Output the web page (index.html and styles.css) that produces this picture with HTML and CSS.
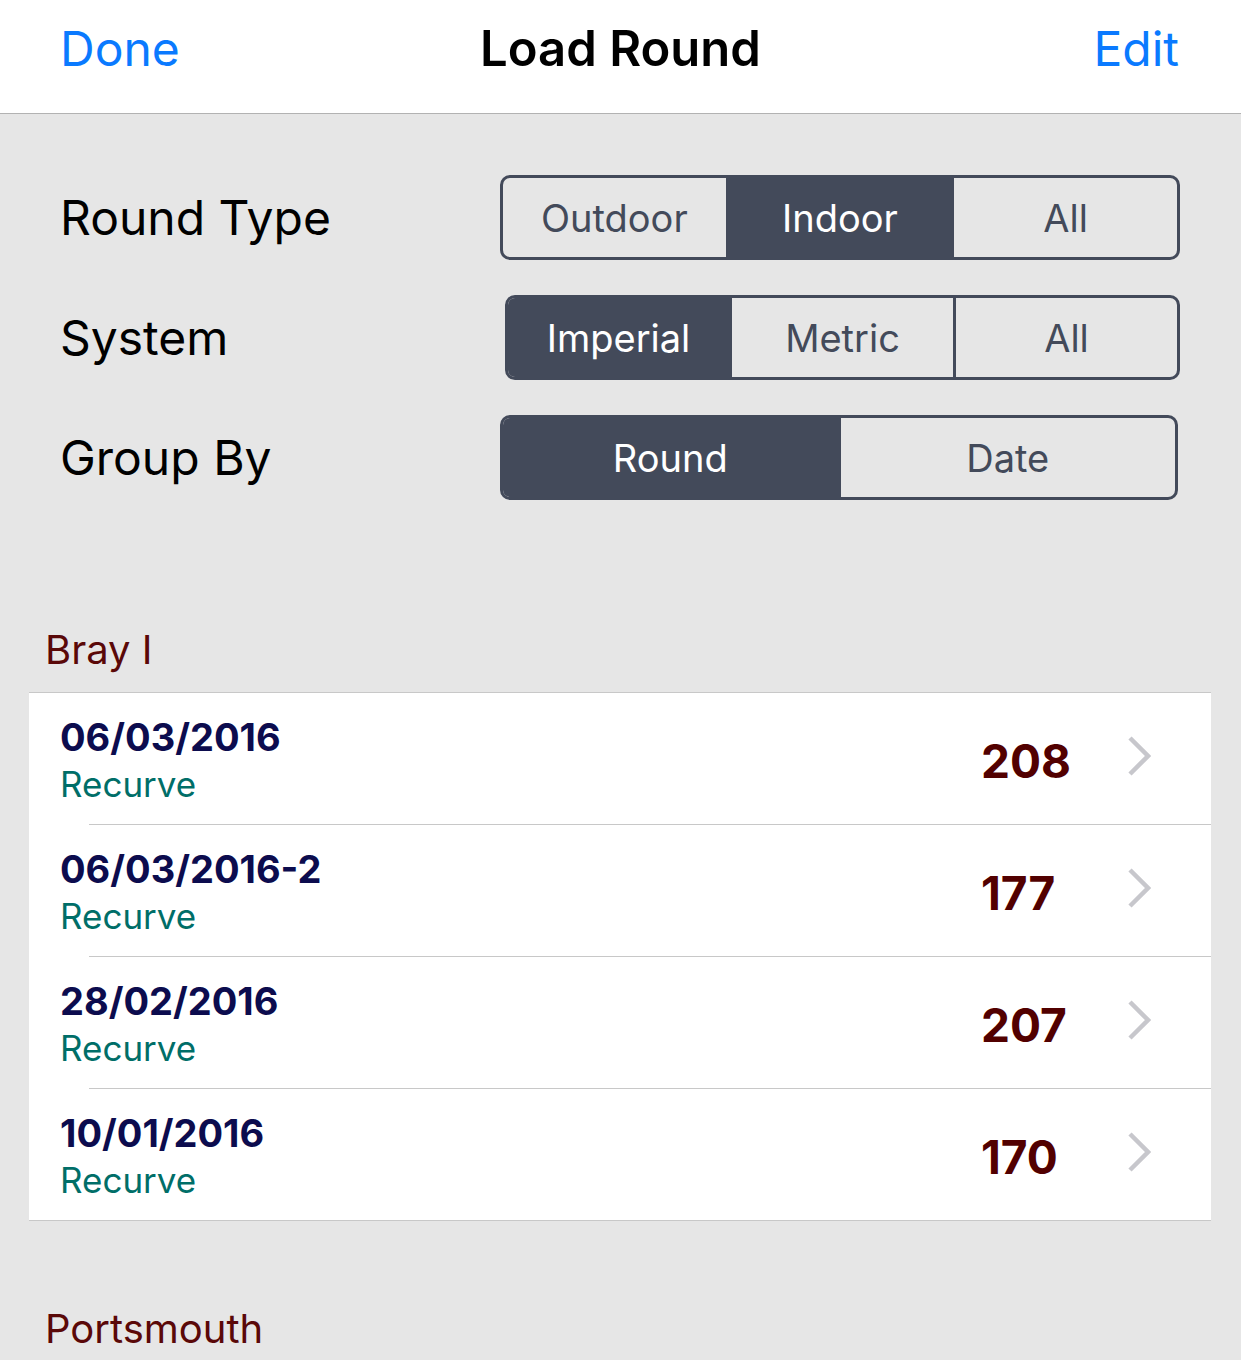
FILE: index.html
```html
<!DOCTYPE html>
<html>
<head>
<meta charset="utf-8">
<link rel="stylesheet" href="styles.css">
</head>
<body>
<div class="app">
  <header class="nav">
    <span class="nav-btn">Done</span>
    <span class="nav-title">Load Round</span>
    <span class="nav-btn">Edit</span>
  </header>

  <section class="filters">
    <div class="filter-row">
      <span class="filter-label">Round Type</span>
      <div class="seg seg-a">
        <span class="seg-item">Outdoor</span>
        <span class="seg-item active">Indoor</span>
        <span class="seg-item">All</span>
      </div>
    </div>
    <div class="filter-row">
      <span class="filter-label">System</span>
      <div class="seg seg-b">
        <span class="seg-item active">Imperial</span>
        <span class="seg-item">Metric</span>
        <span class="seg-item">All</span>
      </div>
    </div>
    <div class="filter-row">
      <span class="filter-label">Group By</span>
      <div class="seg seg-c">
        <span class="seg-item active">Round</span>
        <span class="seg-item">Date</span>
      </div>
    </div>
  </section>

  <section class="group">
    <h2 class="group-title">Bray I</h2>
    <ul class="list">
      <li class="row">
        <div class="row-text"><div class="row-date">06/03/2016</div><div class="row-bow">Recurve</div></div>
        <div class="row-score">208</div>
        <svg class="chev" viewBox="0 0 24 40" width="24" height="40"><path d="M3 2 L21 20 L3 38" fill="none" stroke="#c7c7cc" stroke-width="4.5"/></svg>
      </li>
      <li class="row">
        <div class="row-text"><div class="row-date">06/03/2016-2</div><div class="row-bow">Recurve</div></div>
        <div class="row-score">177</div>
        <svg class="chev" viewBox="0 0 24 40" width="24" height="40"><path d="M3 2 L21 20 L3 38" fill="none" stroke="#c7c7cc" stroke-width="4.5"/></svg>
      </li>
      <li class="row">
        <div class="row-text"><div class="row-date">28/02/2016</div><div class="row-bow">Recurve</div></div>
        <div class="row-score">207</div>
        <svg class="chev" viewBox="0 0 24 40" width="24" height="40"><path d="M3 2 L21 20 L3 38" fill="none" stroke="#c7c7cc" stroke-width="4.5"/></svg>
      </li>
      <li class="row">
        <div class="row-text"><div class="row-date">10/01/2016</div><div class="row-bow">Recurve</div></div>
        <div class="row-score">170</div>
        <svg class="chev" viewBox="0 0 24 40" width="24" height="40"><path d="M3 2 L21 20 L3 38" fill="none" stroke="#c7c7cc" stroke-width="4.5"/></svg>
      </li>
    </ul>
  </section>

  <section class="group group-next">
    <h2 class="group-title">Portsmouth</h2>
  </section>
</div>
</body>
</html>
```

FILE: styles.css
```css
html, body {
  margin: 0;
  padding: 0;
}
body {
  background: #e6e6e6;
  font-family: Inter, "Noto Sans", "Liberation Sans", sans-serif;
  width: 1241px;
  height: 1360px;
  overflow: hidden;
}
.app {
  display: flex;
  flex-direction: column;
}
.nav {
  height: 113px;
  background: #ffffff;
  border-bottom: 1px solid #b2b2b2;
  display: flex;
  align-items: center;
  justify-content: space-between;
  padding: 0 62px 0 60px;
  box-sizing: content-box;
  position: relative;
}
.nav-btn {
  color: #0a7aff;
  font-size: 48px;
  line-height: 1;
  padding-bottom: 16px;
}
.nav-title {
  position: absolute;
  left: 0;
  right: 0;
  text-align: center;
  font-size: 49px;
  font-weight: 600;
  color: #000;
  line-height: 1;
  padding-bottom: 16px;
  pointer-events: none;
}
.filters {
  display: flex;
  flex-direction: column;
  gap: 35px;
  padding: 61px 61px 0 60px;
}
.filter-row {
  display: flex;
  align-items: center;
  justify-content: space-between;
  height: 85px;
}
.filter-label {
  font-size: 48px;
  color: #000;
}
.seg {
  display: flex;
  height: 85px;
  box-sizing: border-box;
  border: 3px solid #434a5a;
  border-radius: 10px;
  overflow: hidden;
}
.seg-a { width: 680px; }
.seg-b { width: 675px; }
.seg-c { width: 678px; margin-right: 2px; }
.seg-item {
  flex: 1;
  display: flex;
  align-items: center;
  justify-content: center;
  font-size: 38px;
  color: #434a5a;
  border-left: 3px solid #434a5a;
}
.seg-item:first-child { border-left: none; }
.seg-item.active {
  background: #434a5a;
  color: #ffffff;
}
.group {
  display: flex;
  flex-direction: column;
  padding-top: 127px;
}
.group-title {
  margin: 0 0 19px 45px;
  font-size: 40px;
  font-weight: 400;
  color: #5a0808;
  line-height: 46px;
}
.list {
  list-style: none;
  margin: 0 30px 0 29px;
  padding: 0;
  background: #ffffff;
  border-top: 1px solid #c8c8c8;
  border-bottom: 1px solid #c8c8c8;
}
.row {
  height: 131px;
  display: flex;
  align-items: center;
  padding: 0 60px 0 31px;
}
.row + .row {
  border-top: 1px solid #c8c8c8;
  margin-left: 60px;
  padding-left: 0;
}
.row + .row .row-text { margin-left: -29px; }
.row-text {
  flex: 1;
  display: flex;
  flex-direction: column;
  padding-top: 1px;
}
.row-date {
  font-size: 38px;
  font-weight: 700;
  color: #0c0c4e;
  line-height: 44px;
}
.row-bow {
  font-size: 35px;
  color: #006e68;
  line-height: 40px;
  margin-top: 5px;
}
.row-score {
  width: 146px;
  font-size: 46px;
  font-weight: 700;
  color: #520000;
  line-height: 1;
  padding-top: 4px;
}
.chev {
  display: block;
  flex: none;
  margin-bottom: 5px;
}
.group-next {
  padding-top: 85px;
}
```
